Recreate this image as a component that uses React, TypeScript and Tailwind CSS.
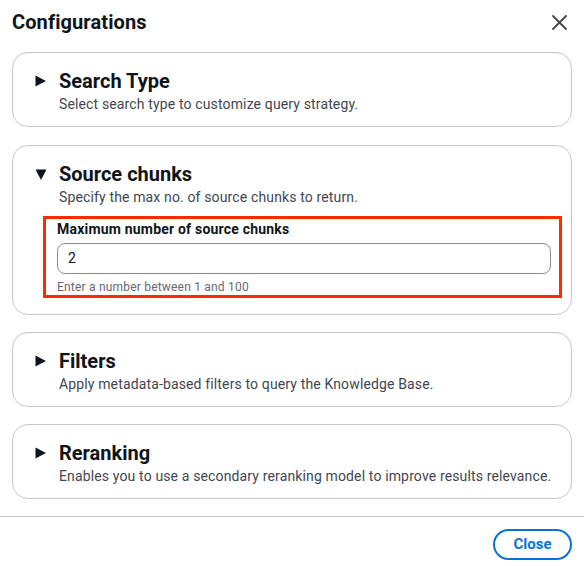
import React from "react";

function TriRight() {
  return (
    <svg width="11" height="12" viewBox="0 0 11 12" className="shrink-0">
      <path d="M0.5 0.5 L11 6 L0.5 11.5 Z" fill="#0f141a" />
    </svg>
  );
}

function TriDown() {
  return (
    <svg width="12" height="11" viewBox="0 0 12 11" className="shrink-0">
      <path d="M0.5 0.5 L11.5 0.5 L6 11 Z" fill="#0f141a" />
    </svg>
  );
}

function Section({
  title,
  desc,
  open,
  children,
  className = "",
}: {
  title: string;
  desc: string;
  open?: boolean;
  children?: React.ReactNode;
  className?: string;
}) {
  return (
    <div
      className={`border border-[#c6c6cd] rounded-[16px] pl-[22px] pt-4 ${
        open ? "pb-4" : "pb-[11px]"
      } ${className}`}
    >
      <div className={`flex items-center h-6 ${open ? "gap-3" : "gap-[13px]"}`}>
        {open ? <TriDown /> : <TriRight />}
        <span className="text-[20px] leading-6 font-bold text-[#0f141a]">{title}</span>
      </div>
      <div className="pl-6 text-[14px] leading-[22px] tracking-[0.14px] text-[#424650]">{desc}</div>
      {children}
    </div>
  );
}

export default function App() {
  return (
    <div
      className="w-[584px] h-[566px] bg-white flex flex-col"
      style={{ fontFamily: "Roboto, 'Liberation Sans', sans-serif" }}
    >
      <div className="h-[44px] flex items-center justify-between pl-3 pr-[17px]">
        <span className="text-[20px] font-bold text-[#0f141a] leading-6 tracking-[0.1px]">Configurations</span>
        <svg width="15" height="15" viewBox="0 0 15 15">
          <path d="M1 1 L14 14 M14 1 L1 14" stroke="#424650" strokeWidth="1.8" strokeLinecap="round" />
        </svg>
      </div>
      <div className="mt-2 px-3 flex flex-col gap-[17px]">
        <Section
          className="mb-[1px]"
          title="Search Type"
          desc="Select search type to customize query strategy."
        />
        <Section title="Source chunks" desc="Specify the max no. of source chunks to return." open>
          <div className="mt-2 ml-2 mr-[9px] border-[3px] border-[#ff2a00] pl-[11px] pr-2">
            <div className="text-[14px] leading-5 font-bold tracking-[0.2px] text-[#0f141a]">
              Maximum number of source chunks
            </div>
            <div className="mt-1 h-[31px] border border-[#8c8c94] rounded-[8px] flex items-center px-[10px] text-[14px] text-[#0f141a]">
              2
            </div>
            <div className="mt-[5px] text-[12px] leading-4 tracking-[0.2px] text-[#656871]">
              Enter a number between 1 and 100
            </div>
          </div>
        </Section>
        <Section title="Filters" desc="Apply metadata-based filters to query the Knowledge Base." />
        <Section
          title="Reranking"
          desc="Enables you to use a secondary reranking model to improve results relevance."
        />
      </div>
      <div className="mt-[17px] border-t border-[#c6c6cd] flex justify-end pr-3 pt-3">
        <button className="h-[31px] w-[79px] rounded-full border-2 border-[#0972d3] text-[#0972d3] text-[15px] font-bold flex items-center justify-center">
          Close
        </button>
      </div>
    </div>
  );
}
